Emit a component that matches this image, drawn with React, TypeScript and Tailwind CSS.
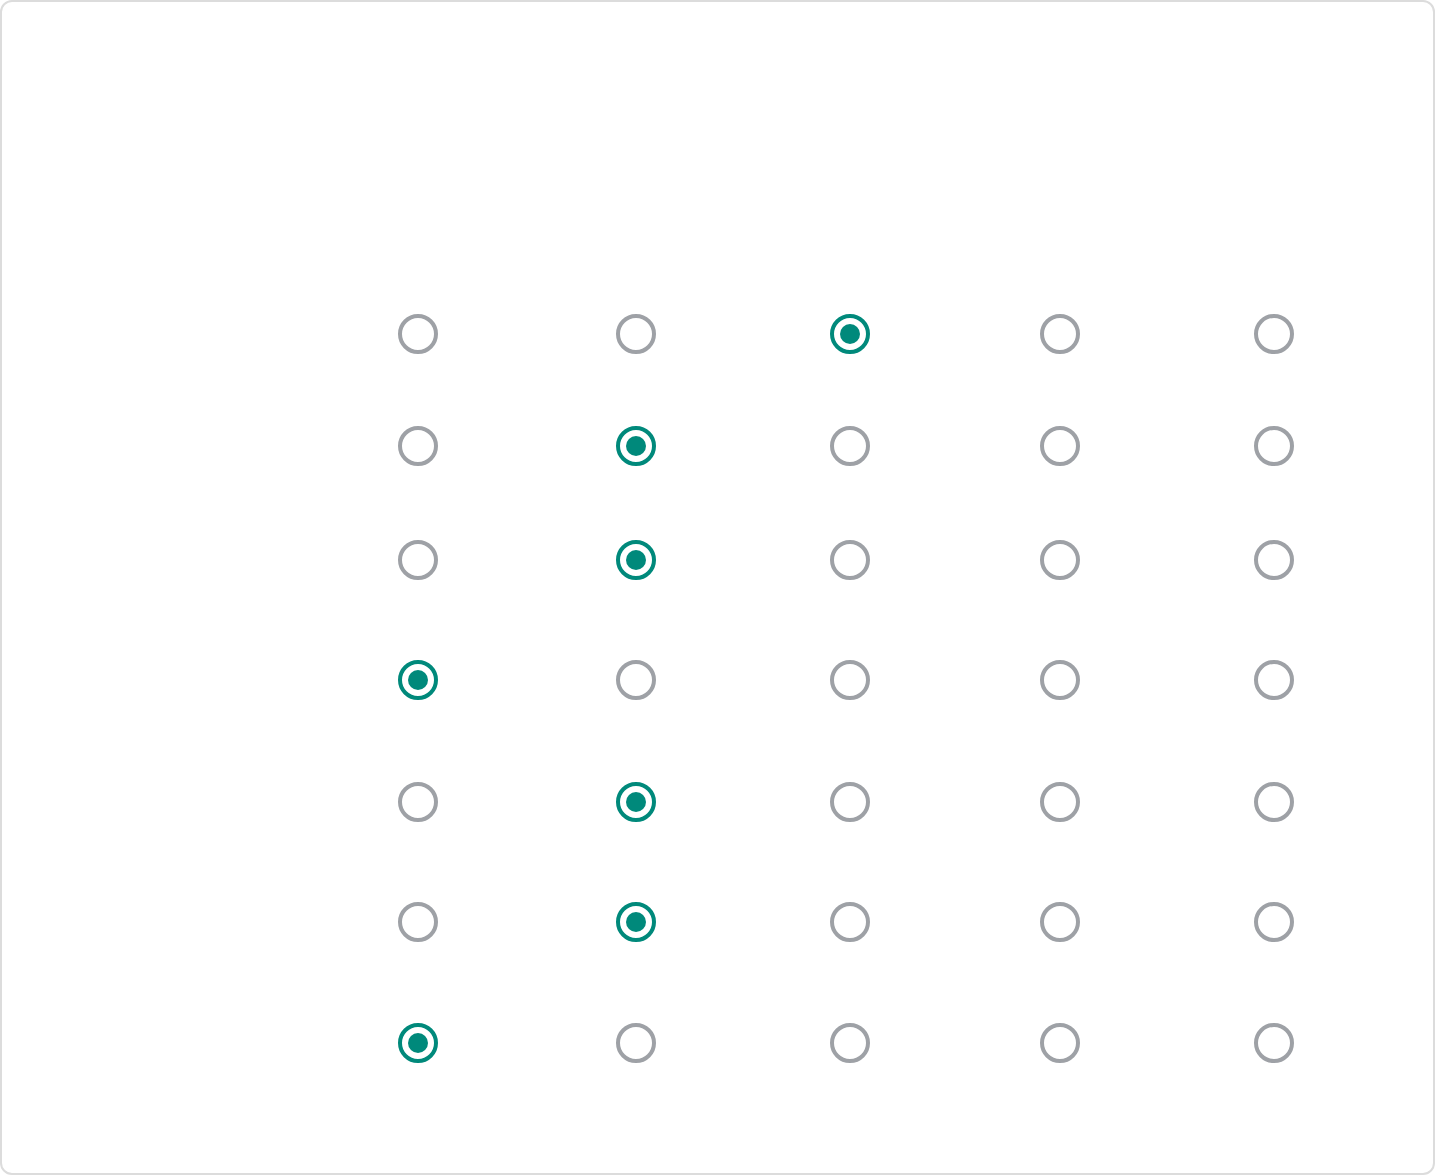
import React from 'react';

// selected column index per row
const answers = [2, 1, 1, 0, 1, 1, 0];
const rowHeights = ['h-[112px]', 'h-[112px]', 'h-[116px]', 'h-[124px]', 'h-[120px]', 'h-[120px]', 'h-[122px]'];
const colWidths = ['w-[218px]', 'w-[218px]', 'w-[210px]', 'w-[210px]', 'w-[218px]'];

const Radio: React.FC<{ checked: boolean }> = ({ checked }) => (
  <span
    role="radio"
    aria-checked={checked}
    className={`flex size-[40px] items-center justify-center rounded-full border-4 bg-white ${
      checked ? 'border-[#00897b]' : 'border-[#9ea1a6]'
    }`}
  >
    {checked && <span className="size-[20px] rounded-full bg-[#00897b]" />}
  </span>
);

export default function App() {
  const [selected, setSelected] = React.useState<number[]>(answers);

  return (
    <div className="h-[1175px] w-full rounded-xl border-2 border-[#dcdcdc] bg-white font-['Roboto',sans-serif]">
      {/* header row (column labels are blank) */}
      <div className="h-[276px]" />
      {selected.map((sel, r) => (
        <div key={r} className={`flex items-center ${rowHeights[r]}`}>
          <div className="w-[307px] shrink-0" />
          {colWidths.map((w, c) => (
            <div
              key={c}
              className={`flex shrink-0 justify-center ${w}`}
              onClick={() => setSelected((prev) => prev.map((v, i) => (i === r ? c : v)))}
            >
              <Radio checked={sel === c} />
            </div>
          ))}
        </div>
      ))}
    </div>
  );
}
